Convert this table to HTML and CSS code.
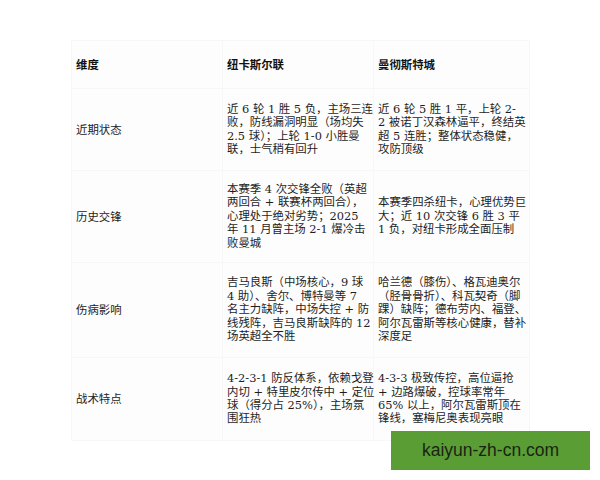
FILE: index.html
```html
<!DOCTYPE html>
<html lang="zh">
<head>
<meta charset="utf-8">
<title>纽卡斯尔联 vs 曼彻斯特城</title>
<link rel="stylesheet" href="styles.css">
</head>
<body>
<div class="page">
  <table class="cmp">
    <colgroup>
      <col class="c1"><col class="c2"><col class="c3">
    </colgroup>
    <thead>
      <tr class="r0">
        <th>维度</th>
        <th>纽卡斯尔联</th>
        <th>曼彻斯特城</th>
      </tr>
    </thead>
    <tbody>
      <tr class="r1">
        <td class="lbl">近期状态</td>
        <td>近 6 轮 1 胜 5 负，主场三连<br>败，防线漏洞明显（场均失<br>2.5 球）；上轮 1-0 小胜曼<br>联，士气稍有回升</td>
        <td>近 6 轮 5 胜 1 平，上轮 2-<br>2 被诺丁汉森林逼平，终结英<br>超 5 连胜；整体状态稳健，<br>攻防顶级</td>
      </tr>
      <tr class="r2">
        <td class="lbl">历史交锋</td>
        <td>本赛季 4 次交锋全败（英超<br>两回合 + 联赛杯两回合），<br>心理处于绝对劣势；2025<br>年 11 月曾主场 2-1 爆冷击<br>败曼城</td>
        <td>本赛季四杀纽卡，心理优势巨<br>大；近 10 次交锋 6 胜 3 平<br>1 负，对纽卡形成全面压制</td>
      </tr>
      <tr class="r3">
        <td class="lbl">伤病影响</td>
        <td>吉马良斯（中场核心，9 球<br>4 助）、舍尔、博特曼等 7<br>名主力缺阵，中场失控 + 防<br>线残阵，吉马良斯缺阵的 12<br>场英超全不胜</td>
        <td>哈兰德（膝伤）、格瓦迪奥尔<br>（胫骨骨折）、科瓦契奇（脚<br>踝）缺阵；德布劳内、福登、<br>阿尔瓦雷斯等核心健康，替补<br>深度足</td>
      </tr>
      <tr class="r4">
        <td class="lbl">战术特点</td>
        <td>4-2-3-1 防反体系，依赖戈登<br>内切 + 特里皮尔传中 + 定位<br>球（得分占 25%），主场氛<br>围狂热</td>
        <td>4-3-3 极致传控，高位逼抢<br>+ 边路爆破，控球率常年<br>65% 以上，阿尔瓦雷斯顶在<br>锋线，塞梅尼奥表现亮眼</td>
      </tr>
    </tbody>
  </table>
  <div class="watermark">kaiyun-zh-cn.com</div>
</div>
</body>
</html>
```

FILE: styles.css
```css
html, body {
  margin: 0;
  padding: 0;
  background: #ffffff;
}

.page {
  position: relative;
  width: 600px;
  height: 480px;
  padding: 40px 0 0 71px;
  box-sizing: border-box;
  font-family: "DejaVu Serif", "Noto Sans CJK SC", serif;
  color: #1e1e1e;
}

.cmp {
  border-collapse: collapse;
  table-layout: fixed;
  width: 458px;
  font-size: 11.4px;
  line-height: 13.4px;
}

.c1 { width: 151px; }
.c2 { width: 151px; }
.c3 { width: 156px; }

.cmp th,
.cmp td {
  padding: 0 4px;
  text-align: left;
  vertical-align: middle;
  white-space: nowrap;
  background: #fdfdfd;
  border: 1px solid #f7f7f7;
}

.cmp th {
  font-family: "Noto Sans CJK SC", "Liberation Sans", sans-serif;
  font-weight: 700;
  color: #111;
}

.cmp .lbl {
  font-family: "Noto Sans CJK SC", "Liberation Sans", sans-serif;
  color: #222;
}

.r0 { height: 48px; }
.r1 { height: 82px; }
.r2 { height: 92px; }
.r3 { height: 95px; }
.r4 { height: 83px; }

.watermark {
  position: absolute;
  left: 391px;
  top: 431px;
  width: 199px;
  height: 39px;
  background: #5a9d35;
  color: #1a2414;
  font-family: "Liberation Sans", "DejaVu Sans", sans-serif;
  font-size: 17.5px;
  line-height: 39px;
  text-align: center;
}
```
